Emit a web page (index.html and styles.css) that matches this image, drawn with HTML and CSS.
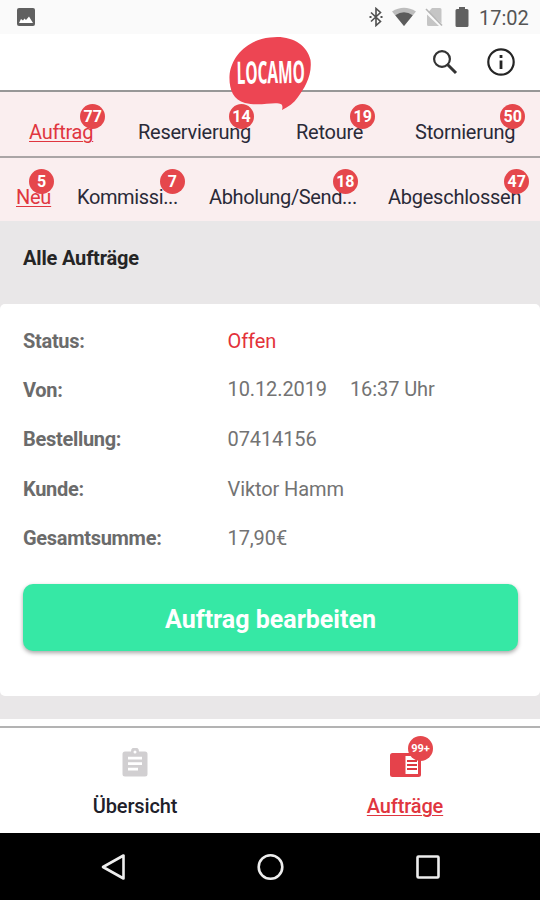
FILE: index.html
```html
<!DOCTYPE html>
<html lang="de">
<head>
<meta charset="utf-8">
<title>Locamo</title>
<link rel="stylesheet" href="styles.css">
</head>
<body>
<div class="screen">
  <div class="status-bar">
    <svg class="photo" width="18" height="18" viewBox="0 0 18 18"><rect width="18" height="18" rx="2" fill="#606060"/><path d="M2 15l2-4 2 1.500 1.500-2L9 12l3-3.500 4 6.500z" fill="#fff"/></svg>
    <div class="status-icons">
      <svg width="14" height="20" viewBox="0 0 14 20" fill="none" stroke="#505050" stroke-width="1.6"><path d="M2 5.5l9.500 9L7 18.500V1.500l4.500 4L2 14.500"/><path d="M.5 10h2M11.500 10h2" stroke-width="2"/></svg>
      <svg width="24" height="20" viewBox="0 0 24 20"><path d="M0 4.500Q12-3 24 4.500L12 19z" fill="#bdbdbd"/><path d="M3.300 8.200Q12 2.500 20.700 8.200L12 19z" fill="#5c5c5c"/></svg>
      <svg width="18" height="20" viewBox="0 0 18 20"><path d="M7 1h8q1.500 0 1.500 1.500v14L3.500 5zM2 7.500L14 19H3.500Q2 19 2 17.500z" fill="#c5c5c5"/><path d="M1 2l16 16.500" stroke="#b5b5b5" stroke-width="1.600"/></svg>
      <svg width="14" height="20" viewBox="0 0 14 20"><path d="M4 0h6v2h2q1.500 0 1.500 1.500v15q0 1.500-1.500 1.500H2Q.5 20 .5 18.500v-15Q.5 2 2 2h2z" fill="#606060"/></svg>
      <span class="clock">17:02</span>
    </div>
  </div>

  <header class="header">
    <svg class="logo" width="84" height="76" viewBox="0 0 84 76">
      <path d="M42 1.500C62-1.500 79 8 82.500 24C84.500 40 76 53 70 61C66 67 60 71 54 74C55 70 54.500 68 51 67.500C43 66 31 70.500 17 67C5 64 1 53 1.500 40C3 20 20 3.500 42 1.500Z" fill="#ed4553"/>
      <text class="logo-text" x="7" y="47.500" textLength="122" lengthAdjust="spacingAndGlyphs" transform="translate(4 .5) rotate(-1) scale(.56 1)">LOCAMO</text>
    </svg>
    <svg class="search" width="26" height="26" viewBox="0 0 26 26" fill="none" stroke="#333"><circle cx="10" cy="10" r="7.900" stroke-width="2.200"/><path d="M15.500 15.500l8.500 8.500" stroke-width="3"/></svg>
    <svg class="info" width="28" height="28" viewBox="0 0 28 28" fill="none" stroke="#252525"><circle cx="14" cy="14" r="12.700" stroke-width="2.200"/><path d="M14 7v3M14 12.500v8.500" stroke-width="2.800"/></svg>
  </header>

  <nav class="tabs tabs-main">
    <a class="tab active"><span>Auftrag</span><b class="badge">77</b></a>
    <a class="tab"><span>Reservierung</span><b class="badge">14</b></a>
    <a class="tab"><span>Retoure</span><b class="badge">19</b></a>
    <a class="tab"><span>Stornierung</span><b class="badge">50</b></a>
  </nav>
  <nav class="tabs tabs-sub">
    <a class="tab active"><span>Neu</span><b class="badge">5</b></a>
    <a class="tab"><span>Kommissi...</span><b class="badge">7</b></a>
    <a class="tab"><span>Abholung/Send...</span><b class="badge">18</b></a>
    <a class="tab"><span>Abgeschlossen</span><b class="badge">47</b></a>
  </nav>

  <main class="content">
    <h1 class="title">Alle Aufträge</h1>
    <section class="card">
      <dl class="fields">
        <dt>Status:</dt><dd class="open">Offen</dd>
        <dt>Von:</dt><dd class="date"><span>10.12.2019</span><span>16:37 Uhr</span></dd>
        <dt>Bestellung:</dt><dd>07414156</dd>
        <dt>Kunde:</dt><dd>Viktor Hamm</dd>
        <dt>Gesamtsumme:</dt><dd>17,90€</dd>
      </dl>
      <button class="edit">Auftrag bearbeiten</button>
    </section>
    <section class="card next"></section>
  </main>

  <nav class="bottom">
    <a class="item">
      <svg width="26" height="29" viewBox="0 0 26 29"><path d="M3 3.500h6a4 4 0 0 1 8 0h6q2.500 0 2.500 2.500v20q0 2.500-2.500 2.500H3Q.5 28.500.5 26V6Q.5 3.500 3 3.500z" fill="#d1cfd1"/><circle cx="13" cy="4" r="1.500" fill="#fff"/><path d="M6 10.200h14M6 15.700h14M6 21.200h10" stroke="#fff" stroke-width="2.700"/></svg>
      <span>Übersicht</span>
    </a>
    <a class="item active">
      <svg class="book" width="31" height="24" viewBox="0 0 31 24"><rect width="31" height="24" rx="2.500" fill="#e5424b"/><path d="M15.500 3H28v18H15.500z" fill="#fff"/><path d="M17 8h10M17 12h10M17 16h10" stroke="#dc3740" stroke-width="2"/></svg>
      <b class="badge">99+</b>
      <span>Aufträge</span>
    </a>
  </nav>

  <div class="system-nav">
    <svg width="28" height="30" viewBox="0 0 28 30"><path d="M24.500 3.500v23L4 15z" fill="none" stroke="#eee" stroke-width="2.600" stroke-linejoin="round"/></svg>
    <svg width="28" height="28" viewBox="0 0 28 28"><circle cx="13.500" cy="14" r="11.800" fill="none" stroke="#eee" stroke-width="2.600"/></svg>
    <svg width="26" height="26" viewBox="0 0 26 26"><rect x="2.500" y="2.500" width="21" height="21" rx="1" fill="none" stroke="#eee" stroke-width="2.600"/></svg>
  </div>
</div>
</body>
</html>
```

FILE: styles.css
```css
* { box-sizing: border-box; }
body { margin: 0; font-family: Roboto, sans-serif; font-size: 20px; color: #2a2a38; }
.screen { width: 540px; height: 900px; display: flex; flex-direction: column; overflow: hidden; background: #fff; }

.status-bar { height: 34px; flex: none; background: #fafafa; display: flex; justify-content: space-between; align-items: center; padding: 0 11px 0 17px; }
.status-icons { display: flex; align-items: center; }
.status-icons svg:nth-child(1) { margin-right: 9px; }
.status-icons svg:nth-child(2) { margin-right: 9px; }
.status-icons svg:nth-child(3) { margin-right: 12px; }
.clock { margin-left: 10px; width: 50px; font-size: 20px; color: #555; white-space: nowrap; line-height: 34px; padding-top: 2px; }

.header { position: relative; height: 58px; flex: none; border-bottom: 2px solid #979797; display: flex; justify-content: flex-end; align-items: center; padding-right: 25px; }
.logo { position: absolute; left: 228px; top: 2px; z-index: 3; }
.logo-text { font-family: "Open Sans", sans-serif; font-size: 31px; font-weight: 700; fill: #fff; }
.info { margin-left: 29px; }

.tabs { flex: none; display: grid; align-items: start; background: #faeeef; letter-spacing: -.25px; }
.tabs-main { height: 66px; border-bottom: 2px solid #aaa5a6; grid-template-columns: 109px 158px 119px 1fr; padding: 28px 0 0 29px; }
.tabs-sub { height: 63px; grid-template-columns: 61px 132px 179px 1fr; padding: 27px 0 0 16px; }
.tabs-sub .tab:nth-child(2), .tabs-sub .tab:nth-child(3) { letter-spacing: -.37px; }
.tab { position: relative; justify-self: start; line-height: 24px; white-space: nowrap; }
.active { color: #e0363f; text-decoration: underline; text-decoration-thickness: 1px; text-underline-offset: 2px; }
.badge { position: absolute; width: 25px; height: 25px; border-radius: 50%; background: #e5474c; color: #fff; font-size: 16px; font-weight: 700; line-height: 25px; letter-spacing: 0; text-align: center; right: -12px; top: -16px; display: inline-block; }
.tabs-main .tab:nth-child(2) .badge { right: -3px; }
.tabs-main .tab:nth-child(3) .badge { right: -12px; }
.tabs-main .tab:nth-child(4) .badge { right: -10px; }
.tabs-sub .badge { right: -3px; }
.tabs-sub .tab:nth-child(2) .badge { right: -7px; }
.tabs-sub .tab:nth-child(3) .badge { right: -1px; }
.tabs-sub .tab:nth-child(4) .badge { right: -8px; }

.content { height: 505px; flex: none; background: #e9e7e8; }
.title { margin: 0; height: 83px; padding: 25px 23px; font-size: 20px; line-height: 24px; font-weight: 700; letter-spacing: -.17px; color: #252525; }
.card { height: 392px; background: #fff; border-radius: 5px; padding: 12px 23px 0; }
.card.next { height: 7px; margin-top: 23px; border-radius: 0; padding: 0; }
.fields { margin: 0; display: grid; grid-template-columns: 204.5px 1fr; grid-auto-rows: 49.2px; line-height: 50px; color: #737373; }
.fields dt { font-weight: 700; letter-spacing: -.3px; color: #6b6b6b; }
.fields dd { margin: 0; letter-spacing: -.1px; }
.fields .open { color: #e3323a; }
.fields .date { display: flex; gap: 23px; margin-top: -1px; }
.edit { display: block; width: 495px; height: 67px; margin-top: 22px; padding: 4px 0 0; border: 0; border-radius: 10px; background: #36e8a5; color: #fff; font: 700 25px Roboto, sans-serif; box-shadow: 0 2px 4px rgba(0,0,0,.35); }

.bottom { height: 107px; flex: none; border-top: 2px solid #b3b3b3; display: grid; grid-template-columns: 1fr 1fr; color: #20202a; font-weight: 500; letter-spacing: -.15px; }
.item { position: relative; display: flex; flex-direction: column; align-items: center; justify-content: flex-end; padding-bottom: 15px; line-height: 24px; }
.item span { margin-top: 17px; }
.item.active { color: #e0363f; }
.item .badge { right: 107px; top: 8px; font-size: 11px; }

.system-nav { flex: 1; background: #000; display: flex; justify-content: center; align-items: center; gap: 130px; }
```
